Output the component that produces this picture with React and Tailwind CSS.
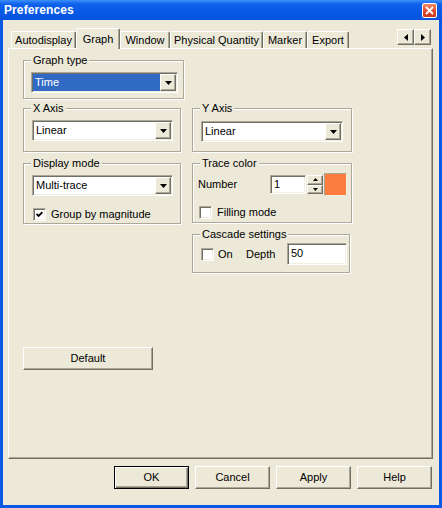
import React from 'react';

const raised =
  'border border-t-white border-l-white border-r-[#716f64] border-b-[#716f64] shadow-[inset_-1px_-1px_0_#aca899]';
const sunken =
  'border border-t-[#aca899] border-l-[#aca899] border-r-white border-b-white shadow-[inset_1px_1px_0_#716f64,inset_-1px_-1px_0_#f1efe2]';

function Arrow({ dir = 'down', size = 4 }) {
  const s = size;
  const paths = {
    down: `M0 0h${s * 2 - 1}L${s - 0.5} ${s}z`,
    up: `M0 ${s}h${s * 2 - 1}L${s - 0.5} 0z`,
    left: `M${s} 0v${s * 2 - 1}L0 ${s - 0.5}z`,
    right: `M0 0v${s * 2 - 1}L${s} ${s - 0.5}z`,
  };
  const vertical = dir === 'down' || dir === 'up';
  const w = vertical ? s * 2 - 1 : s;
  const h = vertical ? s : s * 2 - 1;
  return (
    <svg width={w} height={h} viewBox={`0 0 ${w} ${h}`}>
      <path d={paths[dir]} fill="#000" />
    </svg>
  );
}

function Select({ value, className = '', selected }) {
  return (
    <div className={`flex h-[21px] bg-white p-px ${sunken} ${className}`}>
      <div className={`flex-1 flex items-center pl-[2px] ${selected ? 'bg-[#316ac5] text-white' : ''}`}>
        {value}
      </div>
      <div className={`w-[16px] flex items-center justify-center bg-[#ece9d8] ${raised}`}>
        <Arrow dir="down" />
      </div>
    </div>
  );
}

function GroupBox({ label, className = '', children }) {
  return (
    <div
      className={`relative border border-[#aca899] shadow-[inset_1px_1px_0_white,1px_1px_0_white] ${className}`}
    >
      <span className="absolute left-[7px] -top-[8px] px-[2px] bg-[#ece9d8] leading-[14px]">{label}</span>
      {children}
    </div>
  );
}

function Check({ checked }) {
  return (
    <div className={`w-[13px] h-[13px] shrink-0 bg-white flex items-center justify-center ${sunken}`}>
      {checked && (
        <svg width="7" height="7" viewBox="0 0 7 7">
          <path d="M0.6 3 L2.6 5 L6.4 1.2" stroke="#000" strokeWidth="1.8" fill="none" />
        </svg>
      )}
    </div>
  );
}

function Tab({ label, w, active }) {
  return (
    <div
      className={`relative flex items-center justify-center ${w} ${
        active ? 'h-[21px] -mb-px z-10 bg-[#ece9d8]' : 'h-[17px]'
      } border-t border-l border-r border-t-white border-l-white border-r-[#716f64] shadow-[inset_-1px_0_0_#aca899] rounded-t-[2px]`}
    >
      {label}
    </div>
  );
}

function Button({ label, className = '', isDefault }) {
  return (
    <div
      className={`flex items-center justify-center h-[23px] bg-[#ece9d8] ${
        isDefault
          ? 'border border-black shadow-[inset_1px_1px_0_white,inset_-1px_-1px_0_#716f64,inset_-2px_-2px_0_#aca899]'
          : raised
      } ${className}`}
    >
      {label}
    </div>
  );
}

export default function App() {
  return (
    <div className="w-[442px] h-[508px] flex flex-col bg-[#0a58e6] font-['Liberation_Sans',Arial,sans-serif] text-[11px] text-black select-none">
      {/* title bar */}
      <div className="h-[20px] flex items-center pl-[4px] pr-[5px] bg-[linear-gradient(180deg,#3c8ff8_0%,#0f62ec_20%,#0858e6_60%,#0653e0_100%)]">
        <span className="text-white font-bold text-[12px] tracking-[0.1px]">Preferences</span>
        <div className="ml-auto w-[15px] h-[15px] rounded-[2px] border border-white bg-[linear-gradient(180deg,#ef8a6a,#e0452a_60%,#c93a1e)] flex items-center justify-center">
          <svg width="9" height="9" viewBox="0 0 9 9">
            <path d="M1 1 L8 8 M8 1 L1 8" stroke="#fff" strokeWidth="1.8" />
          </svg>
        </div>
      </div>

      {/* body */}
      <div className="flex-1 mx-[3px] mb-[3px] bg-[#ece9d8] flex flex-col">
        {/* tabs */}
        <div className="mt-[8px] h-[20px] pl-[8px] flex items-end">
          <Tab label="Autodisplay" w="w-[65px]" />
          <Tab label="Graph" w="w-[44px]" active />
          <Tab label="Window" w="w-[50px]" />
          <Tab label="Physical Quantity" w="w-[93px]" />
          <Tab label="Marker" w="w-[44px]" />
          <Tab label="Export" w="w-[42px]" />
          <div className="ml-auto mr-[8px] self-start mt-[1px] flex">
            <div className={`w-[17px] h-[16px] flex items-center justify-center bg-[#ece9d8] ${raised}`}>
              <Arrow dir="left" />
            </div>
            <div className={`w-[17px] h-[16px] flex items-center justify-center bg-[#ece9d8] ${raised}`}>
              <Arrow dir="right" />
            </div>
          </div>
        </div>

        {/* tab panel */}
        <div className="ml-[5px] w-[425px] h-[411px] border border-t-white border-l-white border-r-[#716f64] border-b-[#716f64] shadow-[inset_-1px_-1px_0_#aca899] pl-[14px] pt-[11px]">
          <GroupBox label="Graph type" className="w-[161px] h-[39px] pl-[7px] pt-[11px]">
            <Select value="Time" selected className="w-[147px]" />
          </GroupBox>

          <div className="mt-[9px] flex gap-[11px]">
            <div className="w-[158px] flex flex-col gap-[11px]">
              <GroupBox label="X Axis" className="h-[44px] pl-[8px] pt-[11px]">
                <Select value="Linear" className="w-[141px]" />
              </GroupBox>
              <GroupBox label="Display mode" className="h-[61px] pl-[8px] pt-[11px]">
                <Select value="Multi-trace" className="w-[141px]" />
                <div className="mt-[10px] ml-px flex items-center gap-[5px]">
                  <Check checked />
                  <span>Group by magnitude</span>
                </div>
              </GroupBox>
            </div>

            <div className="w-[160px] flex flex-col gap-[11px]">
              <GroupBox label="Y Axis" className="h-[44px] pl-[8px] pt-[12px]">
                <Select value="Linear" className="w-[142px]" />
              </GroupBox>
              <GroupBox label="Trace color" className="h-[60px] pl-[5px] pt-[9px]">
                <div className="h-[23px] flex items-center">
                  <span className="w-[72px]">Number</span>
                  <div className={`w-[36px] h-[19px] bg-white flex items-center pl-[3px] ${sunken}`}>1</div>
                  <div className="ml-px w-[16px] h-[19px] flex flex-col">
                    <div className={`flex-1 flex items-center justify-center bg-[#ece9d8] ${raised}`}>
                      <Arrow dir="up" size={3} />
                    </div>
                    <div className={`flex-1 flex items-center justify-center bg-[#ece9d8] ${raised}`}>
                      <Arrow dir="down" size={3} />
                    </div>
                  </div>
                  <div className="ml-px w-[23px] h-[23px] bg-[#fb7c3f] border border-t-[#aca899] border-l-[#aca899] border-r-[#f1efe2] border-b-[#f1efe2]" />
                </div>
                <div className="mt-[8px] ml-px flex items-center gap-[5px]">
                  <Check />
                  <span>Filling mode</span>
                </div>
              </GroupBox>
              <GroupBox label="Cascade settings" className="w-[158px] h-[39px] pl-[8px] pt-[8px]">
                <div className="h-[22px] flex items-center">
                  <Check />
                  <span className="ml-[4px] w-[28px]">On</span>
                  <span className="w-[41px]">Depth</span>
                  <div className={`w-[60px] h-[22px] bg-white pl-[3px] pt-[3px] leading-[13px] ${sunken}`}>50</div>
                </div>
              </GroupBox>
            </div>
          </div>

          <Button label="Default" className="mt-[74px] w-[130px]" />
        </div>

        {/* bottom buttons */}
        <div className="mt-[7px] pr-[7px] flex justify-end gap-[6px]">
          <Button label="OK" isDefault className="w-[75px]" />
          <Button label="Cancel" className="w-[75px]" />
          <Button label="Apply" className="w-[75px]" />
          <Button label="Help" className="w-[75px]" />
        </div>
      </div>
    </div>
  );
}
